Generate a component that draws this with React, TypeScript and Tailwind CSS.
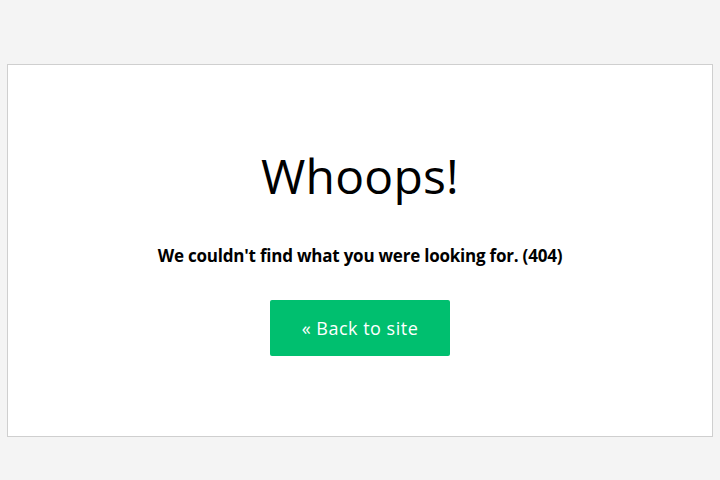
export default function App() {
  return (
    <div
      className="min-h-[480px] bg-[#f4f4f4] pt-16 pb-[44px] px-[7px]"
      style={{ fontFamily: '"Open Sans", "Noto Sans", sans-serif' }}
    >
      <div className="flex flex-col items-center border border-[#cfcfcf] bg-white pt-[75px] pb-[80px] text-black">
        <h1 className="text-[48px] leading-[72px] font-normal tracking-[0.2px]">Whoops!</h1>
        <p className="mt-[30px] text-[17px] leading-[27px] font-bold tracking-[-0.22px]">
          We couldn't find what you were looking for. (404)
        </p>
        <a
          href="#"
          className="mt-[31px] flex h-[56px] w-[180px] items-center justify-center rounded-[2px] bg-[#00bf6f] text-[18px] tracking-[0.5px] text-white"
        >
          « Back to site
        </a>
      </div>
    </div>
  );
}
